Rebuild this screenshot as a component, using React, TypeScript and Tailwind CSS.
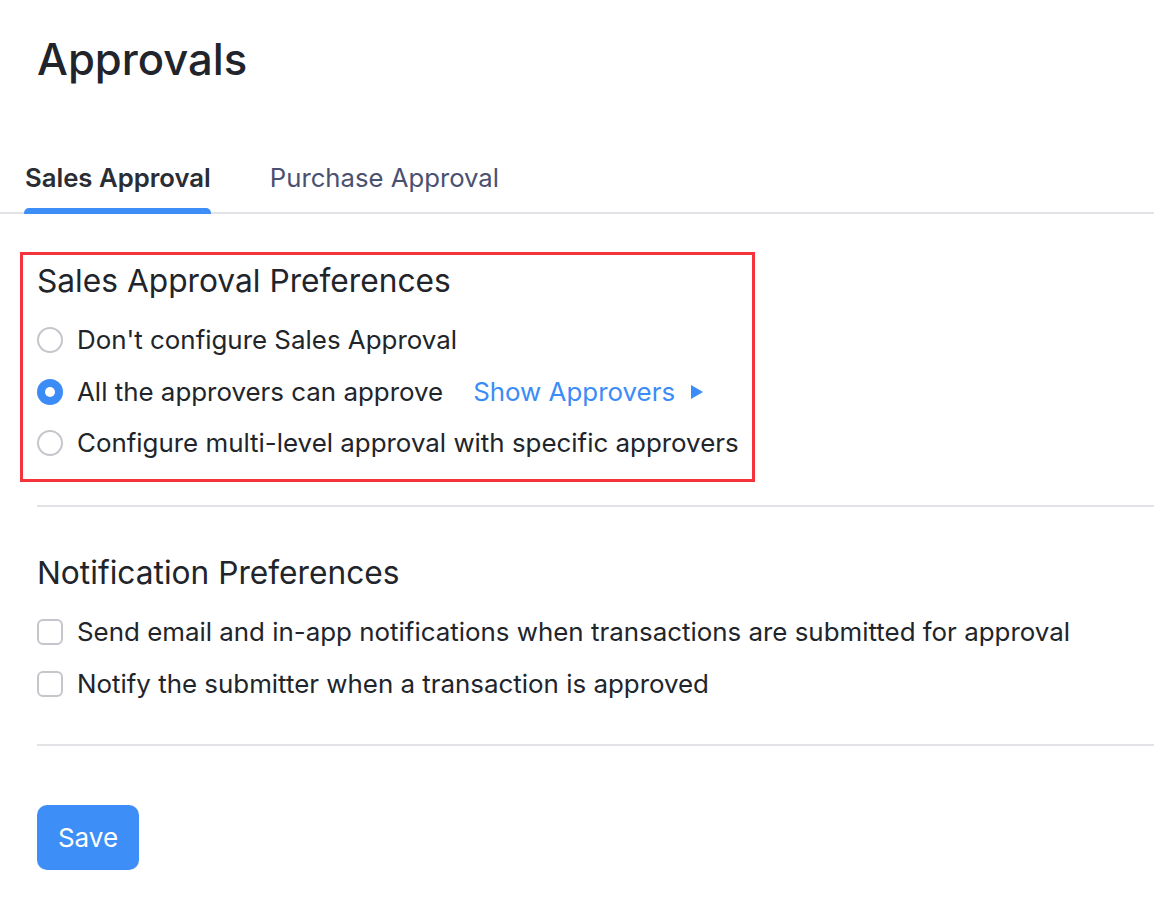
import React from "react";

function Radio({ checked }: { checked?: boolean }) {
  return checked ? (
    <span className="flex h-[26px] w-[26px] shrink-0 items-center justify-center rounded-full bg-[#3b8cf6]">
      <span className="h-[10px] w-[10px] rounded-full bg-white" />
    </span>
  ) : (
    <span className="h-[26px] w-[26px] shrink-0 rounded-full border-2 border-[#c4c6cc] bg-white" />
  );
}

function Checkbox() {
  return <span className="h-[26px] w-[26px] shrink-0 rounded-[6px] border-2 border-[#c4c6cc] bg-white" />;
}

export default function App() {
  return (
    <div className="min-h-screen bg-white font-['Inter',sans-serif] text-[#21252b]">
      <h1 className="px-[37px] pt-[34px] text-[43.6px] font-medium leading-[52px]">Approvals</h1>

      <div className="mt-[77px] flex gap-[59px] border-b-2 border-[#e1e3e7] px-[25px]">
        <div className="relative pb-[19px] text-[25.7px] font-semibold leading-[30px] text-[#2a2d33]">
          Sales Approval
          <span className="absolute -bottom-[2px] -left-[1px] right-0 h-[6px] rounded-t-[5px] bg-[#3d8ef7]" />
        </div>
        <div className="pb-[19px] text-[25.7px] leading-[30px] text-[#4a5170]">Purchase Approval</div>
      </div>

      <div className="pl-[37px]">
        <div className="-ml-[17px] mt-[38px] w-[735px] border-[3px] border-[#f5333b] pb-[20px] pl-[14px] pt-[7px]">
          <h2 className="text-[31.7px] leading-[38px]">Sales Approval Preferences</h2>
          <div className="mt-[24px] flex flex-col gap-[19.5px] text-[25.9px] leading-[32px]">
            <label className="flex items-center gap-[14px]">
              <Radio />
              Don't configure Sales Approval
            </label>
            <label className="flex items-center gap-[14px]">
              <Radio checked />
              All the approvers can approve
              <span className="ml-[16px] flex items-center gap-[16px] text-[#3b8cf6]">
                Show Approvers
                <svg width="12" height="14" viewBox="0 0 12 14">
                  <path d="M0 0 L12 7 L0 14 Z" fill="#3b8cf6" />
                </svg>
              </span>
            </label>
            <label className="flex items-center gap-[14px]">
              <Radio />
              Configure multi-level approval with specific approvers
            </label>
          </div>
        </div>

        <div className="mt-[23px] border-t-2 border-[#e1e3e7] pt-[47px]">
          <h2 className="text-[31.7px] leading-[38px]">Notification Preferences</h2>
          <div className="mt-[24px] flex flex-col gap-[20px] text-[25.9px] leading-[32px]">
            <label className="flex items-center gap-[14px]">
              <Checkbox />
              Send email and in-app notifications when transactions are submitted for approval
            </label>
            <label className="flex items-center gap-[14px]">
              <Checkbox />
              Notify the submitter when a transaction is approved
            </label>
          </div>
        </div>

        <div className="mt-[44px] border-t-2 border-[#e1e3e7] pt-[59px]">
          <button className="h-[65px] w-[102px] rounded-[10px] bg-[#3d8ef7] text-[26px] text-white">Save</button>
        </div>
      </div>
    </div>
  );
}
